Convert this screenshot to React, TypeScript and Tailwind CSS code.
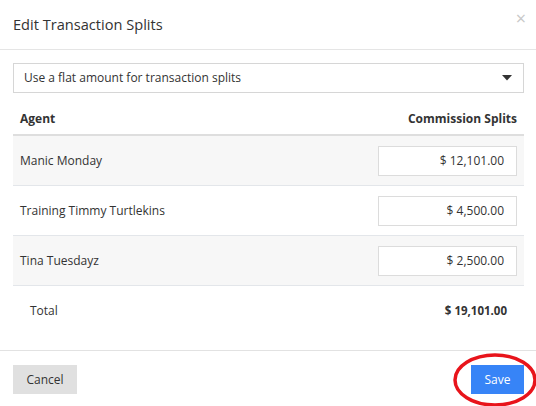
const rows = [
  { name: 'Manic Monday', amount: '$ 12,101.00' },
  { name: 'Training Timmy Turtlekins', amount: '$ 4,500.00' },
  { name: 'Tina Tuesdayz', amount: '$ 2,500.00' },
]

export default function App() {
  return (
    <div className="w-[536px] h-[406px] bg-white text-[#333] overflow-hidden font-['Open_Sans',sans-serif]">
      {/* header */}
      <div className="h-[50px] border-b border-[#e5e5e5] flex items-center justify-between pl-[13px] pr-[10px]">
        <h1 className="text-[14.6px] font-normal text-[#333] mt-[1px]">Edit Transaction Splits</h1>
        <span className="text-[18px] leading-none text-[#c8c8c8] -mt-[14px]">×</span>
      </div>

      <div className="pl-[13px] pr-[12px] pt-[13px]">
        <div className="h-[30px] border border-[#d6d6d6] flex items-center justify-between pl-[10px] pr-[10px] text-[12px]">
          <span>Use a flat amount for transaction splits</span>
          <svg width="10" height="6" viewBox="0 0 10 6" className="mr-[1px]">
            <path d="M0 0h10L5 5.5z" fill="#333" />
          </svg>
        </div>

        <div className="h-[43px] flex items-end justify-between px-[7px] pb-[6px] text-[12px] font-bold border-b-2 border-[#dedede]">
          <span>Agent</span>
          <span>Commission Splits</span>
        </div>

        {rows.map((r, i) => (
          <div
            key={r.name}
            className={`h-[50px] flex items-center justify-between pl-[7px] pr-[7px] border-b border-[#e3e6ea] text-[12px] ${
              i % 2 === 0 ? 'bg-[#f7f7f7]' : 'bg-white'
            }`}
          >
            <span>{r.name}</span>
            <div className="w-[139px] h-[30px] border border-[#dcdcdc] bg-white flex items-center justify-end pr-[12px]">
              {r.amount}
            </div>
          </div>
        ))}

        <div className="h-[50px] flex items-center justify-between pl-[17px] pr-[17px] text-[12px]">
          <span>Total</span>
          <span className="font-bold text-[11.5px]">$ 19,101.00</span>
        </div>
      </div>

      {/* footer */}
      <div className="mt-[14px] border-t border-[#e2e2e2] pt-[14px] pl-[13px] pr-[12px] flex items-center justify-between">
        <button className="h-[29px] w-[64px] bg-[#e0e0e0] text-[12px] text-[#333]">Cancel</button>
        <div className="relative">
          <button className="h-[29px] w-[53px] bg-[#3784f7] text-[12px] text-white">Save</button>
          <svg
            width="90"
            height="56"
            viewBox="0 0 90 56"
            className="absolute left-[-19px] top-[-13px] pointer-events-none"
          >
            <ellipse cx="43" cy="28" rx="40" ry="25" fill="none" stroke="#e8141b" strokeWidth="3.5" />
          </svg>
        </div>
      </div>
    </div>
  )
}
